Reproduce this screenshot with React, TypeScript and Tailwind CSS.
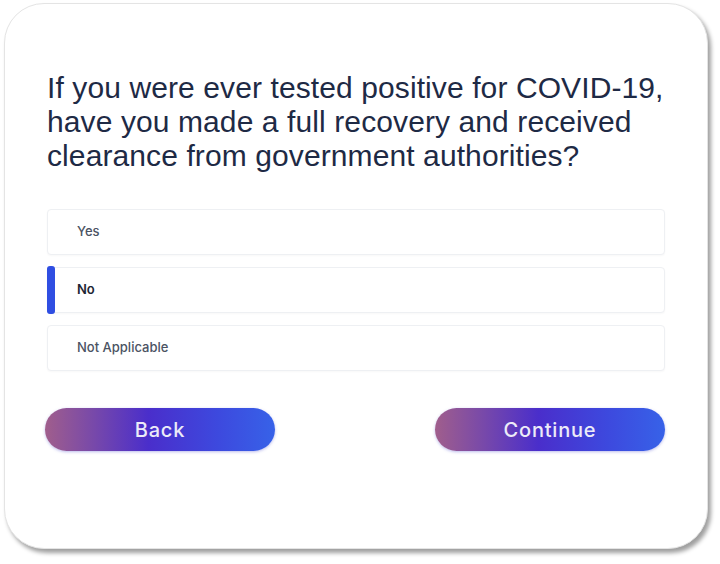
import React from "react";

const options = [
  { label: "Yes", selected: false },
  { label: "No", selected: true },
  { label: "Not Applicable", selected: false },
];

export default function App() {
  return (
    <div className="w-[720px] h-[564px] bg-white pl-[4px] pt-[3px]">
      <div className="w-[704px] h-[546px] rounded-[40px] bg-white border border-[#e4e4e4] shadow-[3px_4px_4px_rgba(0,0,0,0.38)] pl-[42px] pr-[42px] pt-[67px]">
        <h1
          className="text-[30px] leading-[34px] text-[#1e2a45] tracking-[0.1px]"
          style={{ fontFamily: '"Liberation Sans", Arial, sans-serif' }}
        >
          If you were ever tested positive for COVID-19,
          <br />
          have you made a full recovery and received
          <br />
          clearance from government authorities?
        </h1>
        <div className="mt-[36px] flex flex-col gap-[12px]" style={{ fontFamily: 'Inter, "Noto Sans", sans-serif' }}>
          {options.map((o) => (
            <div
              key={o.label}
              className="relative h-[46px] rounded-[4px] border border-[#eef0f3] bg-white flex items-center pl-[29px] shadow-[0_1px_2px_rgba(0,0,0,0.03)]"
            >
              {o.selected && (
                <div className="absolute left-[-1px] top-[-2px] bottom-[-2px] w-[8px] rounded-[3px] bg-[#2f4ee2]" />
              )}
              <span
                className={
                  "text-[13px] " +
                  (o.selected ? "text-[#1e2533] font-semibold" : "text-[#4b5363] font-medium")
                }
              >
                {o.label}
              </span>
            </div>
          ))}
        </div>
        <div className="mt-[37px] ml-[-2px] flex justify-between" style={{ fontFamily: 'Inter, "Noto Sans", sans-serif' }}>
          {["Back", "Continue"].map((b) => (
            <button
              key={b}
              className="w-[230px] h-[43px] rounded-full text-[20px] font-medium tracking-[0.8px] text-[#ecebf8] bg-[linear-gradient(90deg,#a05e8c_0%,#7a4aa8_20%,#4a2ecb_45%,#3d49de_75%,#3762e8_100%)] shadow-[0_1px_3px_rgba(60,60,200,0.35)]"
            >
              {b}
            </button>
          ))}
        </div>
      </div>
    </div>
  );
}
